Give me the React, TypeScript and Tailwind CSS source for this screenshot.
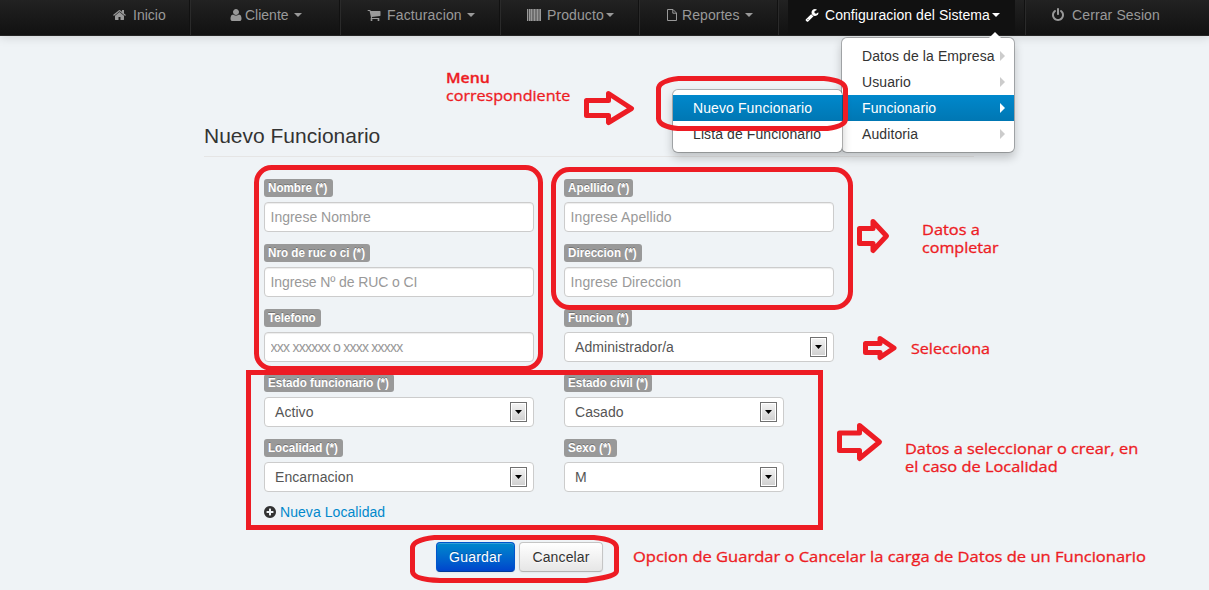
import React from "react";

const paths = {
  home: "M1408 992v480q0 26-19 45t-45 19h-384v-384h-256v384h-384q-26 0-45-19t-19-45v-480q0-1 .5-3t.5-3l575-474 575 474q1 2 1 6zm223-69l-62 74q-8 9-21 11h-3q-13 0-21-7l-692-577-692 577q-12 8-24 7-13-2-21-11l-62-74q-8-10-7-23.5t11-21.5l719-599q32-26 76-26t76 26l244 204v-195q0-14 9-23t23-9h192q14 0 23 9t9 23v408l219 182q10 8 11 21.5t-7 23.5z",
  user: "M1600 1405q0 120-73 189.500t-194 69.500h-874q-121 0-194-69.500t-73-189.500q0-53 3.500-103.500t14-109 26.500-108.500 43-97.500 62-81 85.500-53.500 111.500-20q9 0 42 21.500t74.500 48 108 48 133.500 21.500 133.500-21.500 108-48 74.500-48 42-21.500q61 0 111.500 20t85.500 53.500 62 81 43 97.500 26.500 108.500 14 109 3.500 103.500zm-320-893q0 159-112.5 271.5t-271.5 112.5-271.5-112.5-112.5-271.5 112.5-271.5 271.5-112.5 271.5 112.5 112.5 271.5z",
  cart: "M704 1536q0 52-38 90t-90 38-90-38-38-90 38-90 90-38 90 38 38 90zm896 0q0 52-38 90t-90 38-90-38-38-90 38-90 90-38 90 38 38 90zm128-1088v512q0 24-16.5 42.5t-40.5 21.5l-1044 122q13 60 13 70 0 16-24 64h920q26 0 45 19t19 45-19 45-45 19h-1024q-26 0-45-19t-19-45q0-11 8-31.5t16-36 21.5-40 15.5-29.5l-177-823h-204q-26 0-45-19t-19-45 19-45 45-19h256q16 0 28.5 6.5t19.5 15.5 13 24.5 8 26 5.5 29.5 4.5 26h1201q26 0 45 19t19 45z",
  wrench: "M448 1472q0-26-19-45t-45-19-45 19-19 45 19 45 45 19 45-19 19-45zm644-420l-682 682q-37 37-90 37-52 0-91-37l-106-108q-38-36-38-90 0-53 38-91l681-681q39 98 114.5 173.5t173.5 114.5zm634-435q0 39-23 106-47 134-164.5 217.5t-258.5 83.5q-185 0-316.5-131.5t-131.5-316.5 131.5-316.5 316.5-131.5q58 0 121.5 16.5t107.5 46.5q16 11 16 28t-16 28l-293 169v224l193 107q5-3 79-48.5t135.5-81 70.5-35.5q15 0 23.5 10t8.5 25z",
  power: "M1664 896q0 156-61 298t-164 245-245 164-298 61-298-61-245-164-164-245-61-298q0-182 80.5-343t226.5-270q43-32 95.5-25t83.5 50q32 42 24.5 94.5t-49.5 84.5q-98 74-151.5 181t-53.5 228q0 104 40.5 198.5t109.5 163.5 163.5 109.5 198.5 40.5 198.5-40.5 163.5-109.5 109.5-163.5 40.5-198.5q0-121-53.5-228t-151.5-181q-42-32-49.5-84.5t24.5-94.5q31-43 84-50t95 25q146 109 226.5 270t80.5 343zm-640-768v640q0 52-38 90t-90 38-90-38-38-90v-640q0-52 38-90t90-38 90 38 38 90z",
  plus: "M1344 960v-128q0-26-19-45t-45-19h-256v-256q0-26-19-45t-45-19h-128q-26 0-45 19t-19 45v256h-256q-26 0-45 19t-19 45v128q0 26 19 45t45 19h256v256q0 26 19 45t45 19h128q26 0 45-19t19-45v-256h256q26 0 45-19t19-45zm320-64q0 209-103 385.5t-279.5 279.5-385.5 103-385.5-103-279.5-279.5-103-385.5 103-385.5 279.5-279.5 385.5-103 385.5 103 279.5 279.5 103 385.5z",
};

function Icon({ name, className = "" }: { name: keyof typeof paths; className?: string }) {
  return (
    <svg viewBox="0 0 1792 1792" className={`size-3.5 shrink-0 fill-current ${className}`}>
      <path d={paths[name]} />
    </svg>
  );
}

function BarcodeIcon() {
  const bars = [[0, 1], [2, 1], [3.5, 1.5], [5.5, 0.5], [6.5, 1.5], [8.5, 1], [10, 1.5], [12, 0.6], [13, 1]];
  return (
    <svg viewBox="0 0 14 12" className="h-3 w-3.5 shrink-0 fill-current">
      <rect width="14" height="12" opacity=".35" />
      {bars.map(([x, w]) => (
        <rect key={x} x={x} width={w} height="12" />
      ))}
    </svg>
  );
}

function FileIcon() {
  return (
    <svg viewBox="0 0 10 12" className="h-3 w-2.5 shrink-0 fill-none stroke-current">
      <path d="M.5.5H6L9.5 4v7.5h-9zM5.8.7v3.5h3.5" />
    </svg>
  );
}

function Caret({ className = "" }: { className?: string }) {
  return (
    <svg viewBox="0 0 8 4" className={`h-1 w-2 shrink-0 fill-current ${className}`}>
      <path d="M0 0h8L4 4z" />
    </svg>
  );
}

function NavItem({ className, children }: { className: string; children: React.ReactNode }) {
  return (
    <a className={`flex h-full shrink-0 items-center border-r border-[#2a2a2a] shadow-[inset_-1px_0_0_#111] ${className}`}>
      {children}
    </a>
  );
}

function MenuRow({ label, active, arrow = true }: { label: string; active?: boolean; arrow?: boolean }) {
  return (
    <div
      className={
        active
          ? "flex h-[26px] items-center justify-between bg-linear-to-b from-[#0088cc] to-[#0077b3] pr-[9px] pl-5 text-white"
          : "flex h-[26px] items-center justify-between pr-[9px] pl-5 text-[#333]"
      }
    >
      <span className="tracking-[0.1px] whitespace-nowrap">{label}</span>
      {arrow && (
        <svg viewBox="0 0 5 10" className={active ? "h-2.5 w-[5px] fill-white" : "h-2.5 w-[5px] fill-[#ccc]"}>
          <path d="M0 0l5 5-5 5z" />
        </svg>
      )}
    </div>
  );
}

function Field({ label, children, labelClass }: { label: string; children: React.ReactNode; labelClass: string }) {
  return (
    <div className="flex h-[65px] flex-col items-start gap-[5px]">
      <label
        className={`h-[18px] rounded-[3px] bg-[#999] px-1 text-[12px] leading-[18px] font-bold whitespace-nowrap text-white [text-shadow:0_-1px_0_rgba(0,0,0,0.25)] ${labelClass}`}
      >
        <span className="inline-block origin-left scale-x-[0.97]">{label}</span>
      </label>
      {children}
    </div>
  );
}

function TextInput({ placeholder, className = "" }: { placeholder: string; className?: string }) {
  return (
    <input
      placeholder={placeholder}
      className={`h-[30px] w-[270px] rounded border border-[#ccc] bg-white px-[5.5px] text-sm text-[#555] shadow-[inset_0_1px_1px_rgba(0,0,0,0.075)] outline-none placeholder:text-[#999] ${className}`}
    />
  );
}

function Select({ value, className }: { value: string; className: string }) {
  return (
    <div className={`flex h-[30px] items-center justify-between rounded border border-[#ccc] bg-white pr-1.5 pl-2.5 text-[#555] ${className}`}>
      <span className="tracking-[0.06px]">{value}</span>
      <span className="flex h-5 w-[17px] items-center justify-center border border-[#707070] bg-linear-to-b from-[#f4f4f4] to-[#cfcfcf] text-black shadow-[inset_0_0_0_1px_#fff]">
        <svg viewBox="0 0 7 4" className="h-1 w-[7px] fill-black">
          <path d="M0 0h7L3.5 4z" />
        </svg>
      </span>
    </div>
  );
}

function Note({ className, children }: { className: string; children: React.ReactNode }) {
  return (
    <p className={`absolute origin-left text-[14px] leading-[18px] whitespace-nowrap text-[#ed1c24] [-webkit-text-stroke:0.3px_#ed1c24] [font-family:'Open_Sans','Noto_Sans',sans-serif] ${className}`}>
      {children}
    </p>
  );
}

export default function App() {
  return (
    <div className="relative h-[590px] w-[1209px] overflow-hidden bg-[#eff3f6] text-sm leading-5 text-[#333] [font-family:'Liberation_Sans',Arial,sans-serif]">
      <nav className="flex h-9 border-b border-[#252525] bg-linear-to-b from-[#222] to-[#111] text-[#999] shadow-[0_1px_10px_rgba(0,0,0,0.15)]">
        <NavItem className="w-[191px] pb-[5px] pl-[113px]">
          <Icon name="home" className="mr-[6px]" />
          Inicio
        </NavItem>
        <NavItem className="w-[150px] pb-[5px] pl-[38px]">
          <Icon name="user" className="mr-[2px]" />
          Cliente
          <Caret className="ml-[5px]" />
        </NavItem>
        <NavItem className="w-[160px] pb-[5px] pl-[26px]">
          <Icon name="cart" className="mr-[6px]" />
          <span className="tracking-[0.15px]">Facturacion</span>
          <Caret className="ml-[5px]" />
        </NavItem>
        <NavItem className="w-[139px] gap-[6px] pb-[5px] pl-[26px]">
          <BarcodeIcon />
          <span className="flex items-center gap-[2px] tracking-[0.1px]">
            Producto
            <Caret />
          </span>
        </NavItem>
        <NavItem className="w-[139px] gap-[5px] pb-[5px] pl-[27px]">
          <FileIcon />
          <span className="tracking-[0.1px]">Reportes</span>
          <Caret />
        </NavItem>
        <NavItem className="w-[247px] pl-[9px]">
          <span className="flex h-full w-[227px] items-center bg-[#111] pb-[5px] pl-[17px] text-white">
            <Icon name="wrench" className="mr-[6px]" />
            <span className="tracking-[0.06px]">Configuracion del Sistema</span>
            <Caret className="ml-[2px]" />
          </span>
        </NavItem>
        <a className="flex items-center pb-[5px] pl-[25px]">
          <Icon name="power" className="mr-[7px]" />
          <span className="tracking-[0.12px]">Cerrar Sesion</span>
        </a>
      </nav>

      <main className="ml-[204px] w-[770px]">
        <h1 className="mt-[80px] h-[41px] border-b border-[#e5e5e5] text-[21px] leading-[40px]">Nuevo Funcionario</h1>
        <form className="ml-[60px] pt-[22px]">
          <div className="flex gap-[30px]">
            <div className="w-[270px]">
              <Field label="Nombre (*)" labelClass="w-[69px]"><TextInput placeholder="Ingrese Nombre" /></Field>
              <Field label="Nro de ruc o ci (*)" labelClass="w-[106px]"><TextInput placeholder="Ingrese Nº de RUC o CI" className="tracking-[-0.1px]" /></Field>
              <Field label="Telefono" labelClass="w-[57px]"><TextInput placeholder="xxx xxxxxx o xxxx xxxxx" className="tracking-[-0.75px]" /></Field>
              <Field label="Estado funcionario (*)" labelClass="w-[130px]"><Select value="Activo" className="w-[270px]" /></Field>
              <Field label="Localidad (*)" labelClass="w-[79px]"><Select value="Encarnacion" className="w-[270px]" /></Field>
              <a className="-mt-[2px] flex items-center gap-[3px] tracking-[0.06px] text-[#0088cc]">
                <Icon name="plus" className="-ml-px text-[#333]" />
                Nueva Localidad
              </a>
            </div>
            <div className="w-[270px]">
              <Field label="Apellido (*)" labelClass="w-[69px]"><TextInput placeholder="Ingrese Apellido" className="tracking-[0.1px]" /></Field>
              <Field label="Direccion (*)" labelClass="w-[78px]"><TextInput placeholder="Ingrese Direccion" className="tracking-[0.1px]" /></Field>
              <Field label="Funcion (*)" labelClass="w-[68px]"><Select value="Administrador/a" className="w-[270px]" /></Field>
              <Field label="Estado civil (*)" labelClass="w-[88px]"><Select value="Casado" className="w-[220px]" /></Field>
              <Field label="Sexo (*)" labelClass="w-[53px]"><Select value="M" className="w-[220px]" /></Field>
            </div>
          </div>
          <div className="mt-[20px] ml-[172px] flex gap-1">
            <button type="button" className="h-[30px] w-[79px] rounded border border-[#0055cc] border-b-[#003a9c] bg-linear-to-b from-[#0088cc] to-[#0044cc] tracking-[0.2px] text-white shadow-[inset_0_1px_0_rgba(255,255,255,0.2),0_1px_2px_rgba(0,0,0,0.05)] [text-shadow:0_-1px_0_rgba(0,0,0,0.25)]">
              Guardar
            </button>
            <button type="button" className="h-[30px] w-[84px] rounded border border-[#c5c5c5] border-b-[#b3b3b3] bg-linear-to-b from-white to-[#e6e6e6] tracking-[0.15px] text-[#333] shadow-[inset_0_1px_0_rgba(255,255,255,0.2),0_1px_2px_rgba(0,0,0,0.05)] [text-shadow:0_1px_1px_rgba(255,255,255,0.75)]">
              Cancelar
            </button>
          </div>
        </form>
      </main>

      <div className="absolute top-[37px] left-[841px] w-[174px] rounded-md border border-black/25 bg-white bg-clip-padding py-[5px] shadow-[0_5px_10px_rgba(0,0,0,0.2)]">
        <svg viewBox="0 0 12 6" className="absolute -top-[6px] left-[147px] h-1.5 w-3 fill-white">
          <path d="M0 6l6-6 6 6z" />
        </svg>
        <MenuRow label="Datos de la Empresa" />
        <MenuRow label="Usuario" />
        <MenuRow label="Funcionario" active />
        <MenuRow label="Auditoria" />
      </div>
      <div className="absolute top-[89px] left-[672px] w-[171px] rounded-md border border-black/25 bg-white bg-clip-padding py-[5px] shadow-[0_5px_10px_rgba(0,0,0,0.2)]">
        <MenuRow label="Nuevo Funcionario" active arrow={false} />
        <MenuRow label="Lista de Funcionario" arrow={false} />
      </div>

      <svg viewBox="0 0 1209 590" className="pointer-events-none absolute inset-0 h-[590px] w-[1209px] fill-none stroke-[#ed1c24] stroke-5">
        <path d="M658.5 89q0-8 20-10.500H824q21 2 21.500 10.500V119q0 7-18 9.500H678q-19-2-19.500-10z" />
        <rect x="256.5" y="167.5" width="284" height="201" rx="15" />
        <rect x="553.5" y="169.5" width="297" height="138" rx="16" />
        <rect x="248.5" y="372.5" width="572" height="155" />
        <path d="M412.500 548q0-8 22-10.500H594q22 2 22.500 10V571q0 5-18 7.500l-12 2H440q-27-1-27.500-9z" />
        <g strokeLinejoin="round">
          <path d="M586.500 100.500h22v-7l23 15-23 14v-7h-22z" />
          <path d="M859.500 228.500h13.500v-7l13.500 14.500-13.500 14.500v-7h-13.500z" />
          <path d="M865.500 343.500h14.500v-5l14 9.500-14 9.500v-5h-14.500z" />
          <path d="M839.500 433h20v-7.500l20 16.500-20 16.500v-8h-20z" />
        </g>
      </svg>

      <Note className="top-[69px] left-[446px] scale-x-[1.13] font-semibold">Menu</Note>
      <Note className="top-[87px] left-[446px] scale-x-[1.15]">correspondiente</Note>
      <Note className="top-[221px] left-[922px] scale-x-[1.17]">Datos a</Note>
      <Note className="top-[239px] left-[922px] scale-x-[1.15]">completar</Note>
      <Note className="top-[340px] left-[911px] scale-x-[1.15]">Selecciona</Note>
      <Note className="top-[440px] left-[905px] scale-x-[1.168]">Datos a seleccionar o crear, en</Note>
      <Note className="top-[458px] left-[905px] scale-x-[1.17]">el caso de Localidad</Note>
      <Note className="top-[548px] left-[633px] scale-x-[1.18]">Opcion de Guardar o Cancelar la carga de Datos de un Funcionario</Note>
    </div>
  );
}
